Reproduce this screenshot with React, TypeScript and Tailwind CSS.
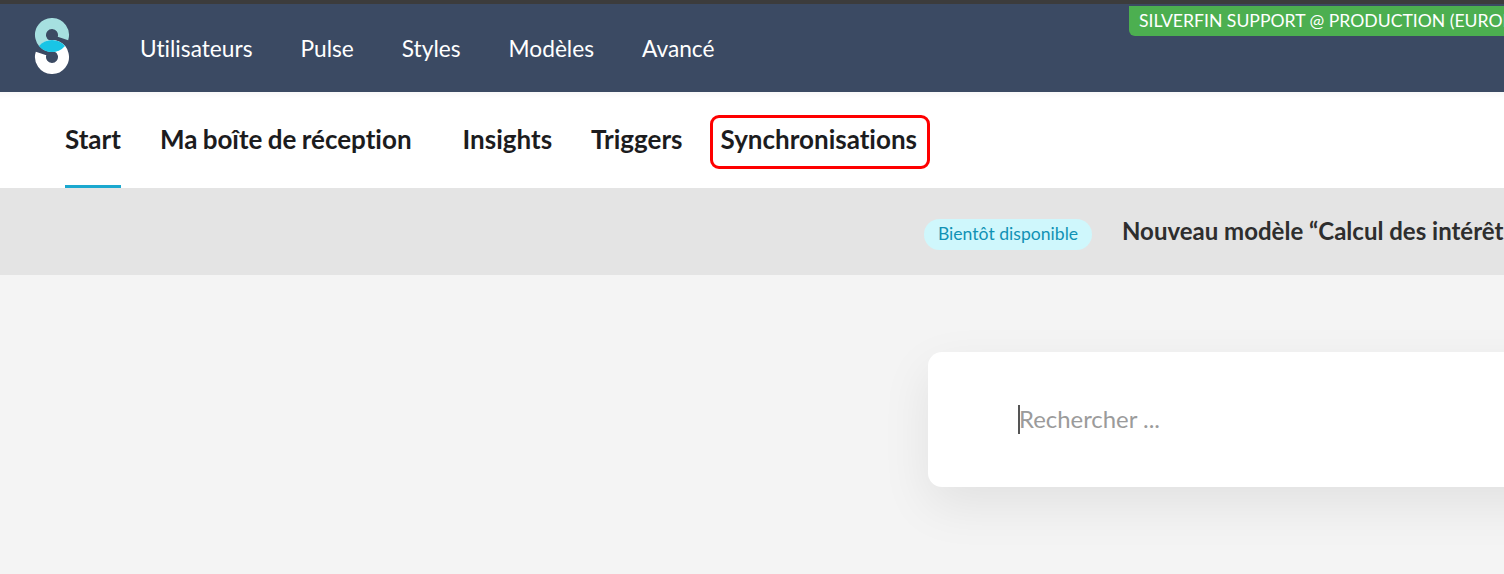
const mainLinks = ['Utilisateurs', 'Pulse', 'Styles', 'Modèles', 'Avancé'];

function Logo() {
  return (
    <svg width="36" height="56" viewBox="0 0 36 56" className="mb-1 shrink-0" fill="none" strokeWidth="11">
      <path d="M28.94 20.55 A11.5 11.5 0 1 0 23.75 26.96" stroke="#a6e0e0" />
      <path d="M7.06 35.45 A11.5 11.5 0 1 0 12.25 29.04" stroke="#ffffff" />
      <path d="M5 28 A17 17 0 0 1 31 28 A17 17 0 0 1 5 28 Z" fill="#19c5e6" />
    </svg>
  );
}

export default function App() {
  return (
    <div className="relative h-[574px] w-[1504px] overflow-hidden bg-[#f4f4f4] font-['Lato','Noto_Sans',sans-serif] [font-variant-ligatures:none]">
      <div className="h-1 bg-[#3c3c3c]" />

      {/* main nav */}
      <nav className="flex h-[88px] items-center bg-[#3b4a63] pl-[34px]">
        <Logo />
        <div className="ml-[70px] mt-[2px] flex gap-12 text-[22.7px] text-white">
          {mainLinks.map((link) => (
            <a key={link}>{link}</a>
          ))}
        </div>
      </nav>

      <div className="absolute left-[1129px] top-[6px] flex h-[30px] w-[500px] items-center whitespace-nowrap rounded-bl-[6px] bg-[#4caf50] pl-[10px] text-[17.6px] text-white">
        SILVERFIN SUPPORT @ PRODUCTION (EUROPE)
      </div>

      {/* sub nav */}
      <div className="flex h-[96px] items-stretch bg-white pl-[65px] text-[26px] font-bold text-[#1c1c1e] shadow-[inset_0_8px_8px_-8px_rgba(0,0,0,0.06)] [word-spacing:-1px]">
        <a className="flex items-center border-b-[3px] border-[#1ba8cf] pt-[1px]">Start</a>
        <a className="ml-[39px] flex items-center pb-[2px]">Ma boîte de réception</a>
        <a className="ml-[51px] flex items-center pb-[2px]">Insights</a>
        <a className="ml-[39px] flex items-center pb-[2px]">Triggers</a>
        <a className="ml-[27px] mt-[23px] flex h-[54px] items-center rounded-[9px] border-[3px] border-[#fe0000] pb-[5px] pl-[8px] pr-[10px]">
          Synchronisations
        </a>
      </div>

      {/* announcement band */}
      <div className="flex h-[87px] items-center whitespace-nowrap bg-[#e4e4e4] pl-[924px]">
        <span className="mt-[6px] flex h-[31px] w-[168px] shrink-0 items-center justify-center rounded-full bg-[#cff7fc] text-[17.6px] text-[#1192b5]">
          Bientôt disponible
        </span>
        <span className="ml-[30px] pb-[2px] text-[24px] font-bold text-[#2e2e2e]">
          Nouveau modèle “Calcul des intérêts
        </span>
      </div>

      {/* search */}
      <div className="ml-[928px] mt-[77px] flex h-[135px] w-[800px] items-center rounded-[14px] bg-white pl-[90px] shadow-[0_18px_50px_rgba(0,0,0,0.08)]">
        <span className="h-[29px] w-[2px] shrink-0 bg-[#555555]" />
        <span className="-ml-[1px] pb-[2px] text-[23.9px] text-[#9b9b9b]">Rechercher ...</span>
      </div>
    </div>
  );
}
